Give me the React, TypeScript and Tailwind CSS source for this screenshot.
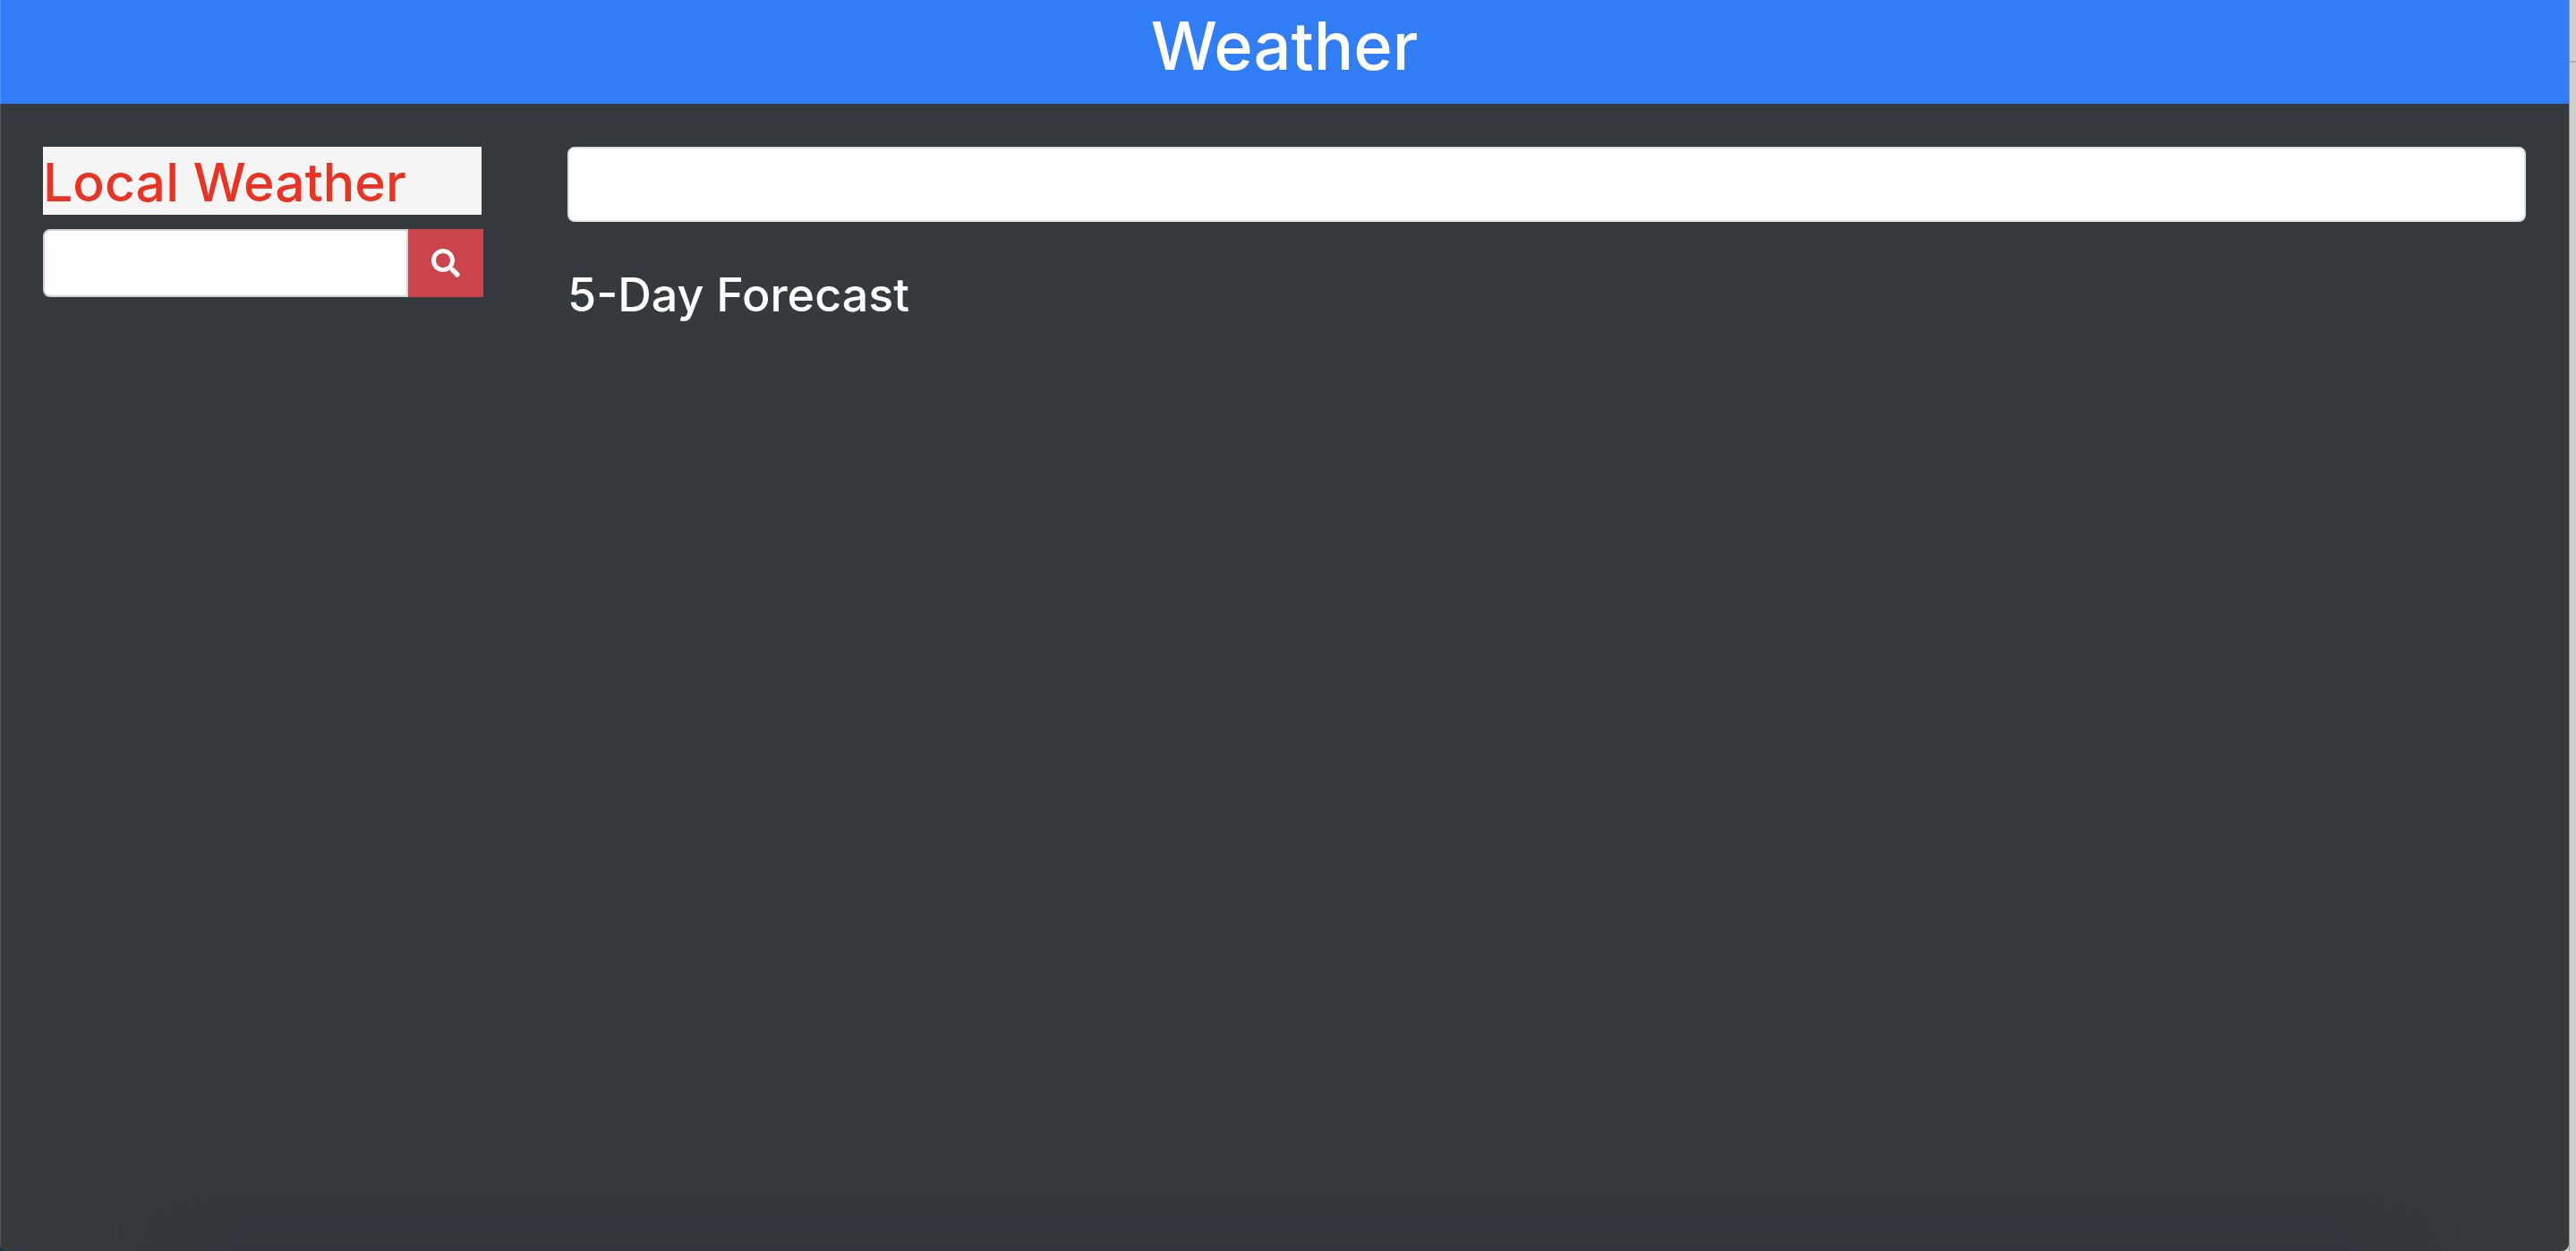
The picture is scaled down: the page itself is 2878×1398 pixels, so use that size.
import { FaSearch } from "react-icons/fa";

export default function App() {
  return (
    <div className="flex min-h-screen bg-[linear-gradient(90deg,#17344f_50%,#cfcfcf_50%)] font-['Inter',sans-serif] font-medium">
      <div className="relative flex min-w-0 grow flex-col overflow-hidden rounded-b-lg bg-[#353a3e]">
        <header className="bg-[#307df6] pt-1 pb-4.5 text-center text-white">
          <h1 className="text-[74px] leading-[94px]">Weather</h1>
        </header>
        <main className="grid grid-cols-[56fr_250fr] items-start gap-24 p-12">
          <aside className="flex min-w-0 flex-col gap-4">
            <h2 className="bg-[#f5f5f5] pt-1 text-[59px] leading-[72px] whitespace-nowrap text-[#eb3323]">
              Local Weather
            </h2>
            <form className="-mr-0.5 flex h-[76px]" onSubmit={(e) => e.preventDefault()}>
              <input
                type="text"
                aria-label="City"
                className="min-w-0 grow rounded-l-lg border-2 border-[#ced4d9] bg-white px-6 text-[32px] text-gray-700 outline-none"
              />
              <button
                type="submit"
                aria-label="Search"
                className="flex w-[84px] shrink-0 items-center justify-center bg-[#ca444a] text-[#f8f9fa]"
              >
                <FaSearch className="size-8" />
              </button>
            </form>
          </aside>
          <section className="min-w-0">
            <div className="h-[84px] rounded-lg border-2 border-[#dfdfdf] bg-white" />
            <h3 className="mt-12 text-[52px] leading-[68px] text-white">5-Day Forecast</h3>
          </section>
        </main>
        <div className="pointer-events-none absolute -bottom-40 left-[210px] right-[200px] h-40 shadow-[0_0_60px_10px_#303238]" />
        <div className="pointer-events-none absolute inset-y-0 left-0 w-px bg-white/15" />
      </div>
      <div className="w-2 shrink-0 border-l border-[#909294]">
        <div className="h-[70px] border-b-2 border-[#b0b0b0]" />
      </div>
    </div>
  );
}
